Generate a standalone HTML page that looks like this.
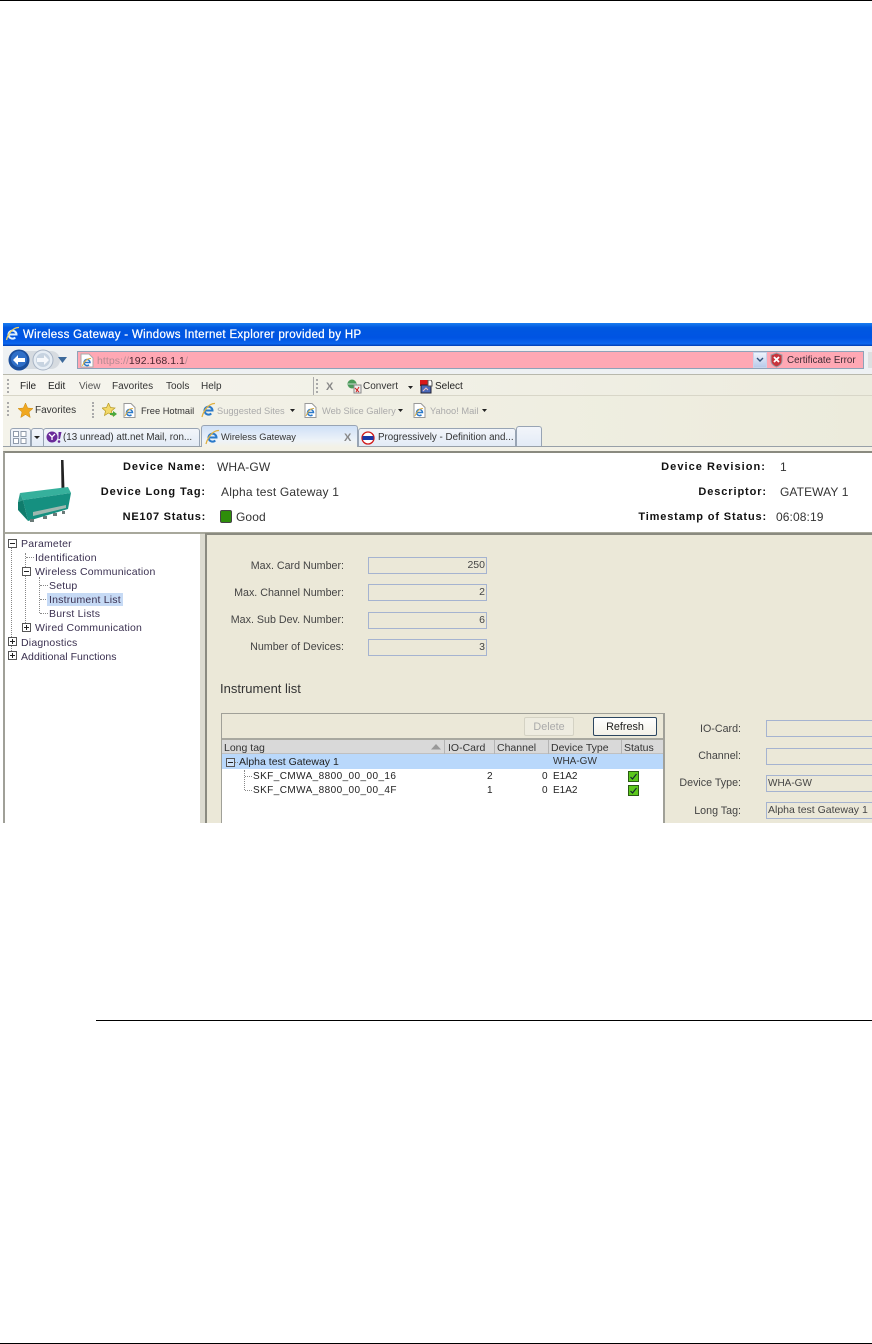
<!DOCTYPE html>
<html><head><meta charset="utf-8"><style>
html,body{margin:0;padding:0;background:#fff}
body{width:872px;height:1344px;position:relative;overflow:hidden;font-family:"Liberation Sans",sans-serif;color:#222}
.r,.t{position:absolute}
.t{white-space:nowrap;font-size:10px;line-height:14px;height:14px}
.g{color:#aaa}
.s{font-size:9.3px}
.b{font-weight:bold;font-size:11px;letter-spacing:.9px;color:#111}
.v{font-size:12px;color:#333;letter-spacing:.1px}
.p{font-size:10.5px;color:#3a3050;letter-spacing:.2px}
.f{font-size:10.7px;color:#444;text-align:right}
.i{position:absolute;box-sizing:border-box;border:1px solid #a5b3d0;background:#ebe8d8;height:17px;font-size:10.5px;line-height:15px;color:#444;text-align:right;padding:0 1px;white-space:nowrap;overflow:hidden}
.tb{position:absolute;box-sizing:border-box;width:9px;height:9px;border:1px solid #555;background:#fff}
.tb:before{content:"";position:absolute;left:1px;top:3px;width:5px;height:1px;background:#222}
.tb.pl:after{content:"";position:absolute;left:3px;top:1px;width:1px;height:5px;background:#222}
.dv{position:absolute;border-left:1px dotted #888}
.dh{position:absolute;border-top:1px dotted #888;height:0}
.ie{position:absolute}
.tab{position:absolute;box-sizing:border-box;border:1px solid #98a4b4;border-bottom:0;border-radius:3px 3px 0 0;background:linear-gradient(#f2f5fa,#e3ebf6)}
.hd{position:absolute;top:740px;height:14px;width:1px;background:#b4b4b4}
.h{font-size:10.5px;color:#333}
</style></head><body>
<div class="r" style="left:0;top:0;width:872px;height:1px;background:#000"></div>
<div class="r" style="left:0;top:1343px;width:872px;height:1px;background:#000"></div>

<!-- title bar -->
<div class="r" style="left:3px;top:323px;width:869px;height:23px;background:linear-gradient(#1a7df0 0,#0058e0 20%,#0054e3 65%,#0a66ee 90%,#003cb0 100%)"></div>
<svg class="ie" style="left:5px;top:326px" width="15" height="16" viewBox="0 0 15 16"><path d="M4 8.500h7.500a4 4 0 1 0-1.200 3" fill="none" stroke="#dff0ff" stroke-width="2"/><path d="M1.500 14C3 7 9 1 14 1.500" fill="none" stroke="#f0d060" stroke-width="1.300"/></svg>
<div class="t" style="left:23px;top:328px;font-size:11.5px;color:#fff;font-weight:400;letter-spacing:.32px;-webkit-text-stroke:.25px #fff">Wireless Gateway - Windows Internet Explorer provided by HP</div>

<!-- nav bar -->
<div class="r" style="left:3px;top:346px;width:869px;height:29px;background:#eef1f3"></div>
<div class="r" style="left:3px;top:374px;width:869px;height:1px;background:#b8b8ac"></div>
<div class="r" style="left:14px;top:351px;width:46px;height:18px;border-radius:9px;background:#d6dbe0"></div>
<svg class="ie" style="left:8px;top:348px" width="50" height="25" viewBox="0 0 50 25">
<circle cx="11" cy="12" r="10.500" fill="#1c4f9c"/><circle cx="11" cy="11" r="8" fill="#2f6fc8"/>
<path d="M5 12l5-5v3h7v4h-7v3z" fill="#fff"/>
<circle cx="35" cy="12" r="10" fill="#e6edf4" stroke="#a8b4c4"/><circle cx="35" cy="12" r="7" fill="#c7d3e0"/>
<path d="M41 12l-5-5v3h-7v4h7v3z" fill="#f6f8fb"/></svg>
<svg class="ie" style="left:58px;top:357px" width="10" height="7"><path d="M0 0h9L4.500 6z" fill="#3d6a9c"/></svg>
<div class="r" style="left:77px;top:351px;width:787px;height:18px;box-sizing:border-box;border:1px solid #8fa2b8;background:#ffa8b4"></div>
<svg class="ie" style="left:80px;top:353px" width="14" height="15" viewBox="0 0 14 15"><path d="M1 1h8l4 4v9H1z" fill="#fff" stroke="#aaa"/><path d="M4 9.500h6a3 3 0 1 0-1 2.300" fill="none" stroke="#2a79c9" stroke-width="1.500"/><path d="M2.500 13C4 8 8 5 11 5.500" fill="none" stroke="#e0b040"/></svg>
<div class="t" style="left:97px;top:354px;font-size:10.5px;color:#b58a92;letter-spacing:.05px">https://<span style="color:#4a2630">192.168.1.1</span>/</div>
<div class="r" style="left:753px;top:352px;width:14px;height:16px;box-sizing:border-box;background:linear-gradient(#eef3fb,#b9caea);border:1px solid #c8d4ea"></div>
<svg class="ie" style="left:756px;top:357px" width="8" height="6"><path d="M1 1l3 3 3-3" fill="none" stroke="#33517a" stroke-width="1.400"/></svg>
<svg class="ie" style="left:770px;top:352px" width="13" height="16" viewBox="0 0 13 16"><path d="M6.500 1L12 3v6c0 3-3 5-5.500 6C4 14 1 12 1 9V3z" fill="#c8343c" stroke="#98a0a8"/><path d="M4 5l5 5M9 5l-5 5" stroke="#fff" stroke-width="1.800"/></svg>
<div class="t" style="left:787px;top:354px;font-size:9.8px;color:#3e2a34">Certificate Error</div>
<div class="r" style="left:868px;top:352px;width:4px;height:16px;background:#dde0e0"></div>

<!-- menu bar -->
<div class="r" style="left:3px;top:375px;width:869px;height:21px;background:linear-gradient(90deg,#f6f5ee,#ecebde)"></div>
<div class="r" style="left:3px;top:395px;width:869px;height:1px;background:#d8d6c8"></div>
<div class="dv" style="left:7px;top:379px;height:14px;border-left:2px dotted #aaa"></div>
<div class="t" style="left:20px;top:380px;color:#222">File</div>
<div class="t" style="left:48px;top:380px;color:#222">Edit</div>
<div class="t" style="left:79px;top:380px;color:#555">View</div>
<div class="t" style="left:112px;top:380px;color:#333">Favorites</div>
<div class="t" style="left:166px;top:380px;color:#333">Tools</div>
<div class="t" style="left:201px;top:380px;color:#333">Help</div>
<div class="r" style="left:313px;top:377px;width:1px;height:18px;background:#aaa"></div>
<div class="dv" style="left:316px;top:379px;height:14px;border-left:2px dotted #aaa"></div>
<div class="t" style="left:326px;top:380px;font-weight:bold;color:#888;font-size:11px">X</div>
<svg class="ie" style="left:347px;top:379px" width="15" height="15" viewBox="0 0 15 15"><circle cx="5" cy="5" r="4.500" fill="#4a9a5a"/><path d="M1 5h8" stroke="#c8d8d0"/><path d="M7 6h7v8H7z" fill="#eee" stroke="#888"/><path d="M8 9l4 4M12 8l-3 5" stroke="#d02020"/></svg>
<div class="t" style="left:363px;top:380px;color:#333">Convert</div>
<svg class="ie" style="left:408px;top:386px" width="6" height="4"><path d="M0 0h5L2.500 3z" fill="#222"/></svg>
<svg class="ie" style="left:420px;top:380px" width="13" height="14" viewBox="0 0 13 14"><rect x="0" y="0" width="8" height="6" fill="#d81818"/><rect x="1" y="5" width="10" height="8" fill="#4a68b8" stroke="#223"/><path d="M8 0h3l1 2v4H8z" fill="#fff" stroke="#555"/><path d="M3 11l3-3 2 2" stroke="#f0c0c0" fill="none"/></svg>
<div class="t" style="left:435px;top:380px;color:#222">Select</div>

<!-- favorites bar -->
<div class="r" style="left:3px;top:396px;width:869px;height:28px;background:linear-gradient(90deg,#f4f3ea,#ecebdc)"></div>
<div class="dv" style="left:7px;top:402px;height:14px;border-left:2px dotted #aaa"></div>
<svg class="ie" style="left:18px;top:403px" width="15" height="15" viewBox="0 0 15 15"><path d="M7.500 0l2.200 5 5.300.5-4 3.500 1.200 5.500-4.700-3-4.700 3 1.200-5.500-4-3.500 5.300-.5z" fill="#f0a820" stroke="#c88810" stroke-width=".5"/></svg>
<div class="t" style="left:35px;top:404px;color:#333">Favorites</div>
<div class="dv" style="left:92px;top:402px;height:16px;border-left:2px dotted #aaa"></div>
<svg class="ie" style="left:102px;top:403px" width="15" height="15" viewBox="0 0 15 15"><path d="M6.500 0l2 4.500 4.500.5-3.500 3 1 4.500-4-2.500-4 2.500 1-4.500L0 5l4.500-.5z" fill="#f2d868" stroke="#b89a20" stroke-width=".7"/><path d="M8 10h3V8l4 3-4 3v-2H8z" fill="#4aa83c"/></svg>
<svg class="ie" style="left:123px;top:403px" width="13" height="15" viewBox="0 0 13 15"><path d="M1 .5h7l4 4v10H1z" fill="#fff" stroke="#999"/><path d="M3.500 9.500h6a3 3 0 1 0-1 2.300" fill="none" stroke="#2a79c9" stroke-width="1.500"/><path d="M2 13C4 8 7 5 10 5.500" fill="none" stroke="#e0b040"/></svg>
<div class="t s" style="left:141px;top:404px;color:#333">Free Hotmail</div>
<svg class="ie" style="left:201px;top:402px" width="15" height="16" viewBox="0 0 15 16"><path d="M4 8.500h7.500a4 4 0 1 0-1.200 3" fill="none" stroke="#2a79c9" stroke-width="2"/><path d="M1 15C3 7 9 1 14 1.500" fill="none" stroke="#e0b040" stroke-width="1.300"/></svg>
<div class="t g s" style="left:217px;top:404px">Suggested Sites</div>
<svg class="ie" style="left:290px;top:409px" width="6" height="4"><path d="M0 0h5L2.500 3z" fill="#222"/></svg>
<svg class="ie" style="left:304px;top:403px" width="13" height="15" viewBox="0 0 13 15"><path d="M1 .5h7l4 4v10H1z" fill="#fff" stroke="#999"/><path d="M3.500 9.500h6a3 3 0 1 0-1 2.300" fill="none" stroke="#2a79c9" stroke-width="1.500"/><path d="M2 13C4 8 7 5 10 5.500" fill="none" stroke="#e0b040"/></svg>
<div class="t g s" style="left:322px;top:404px">Web Slice Gallery</div>
<svg class="ie" style="left:398px;top:409px" width="6" height="4"><path d="M0 0h5L2.500 3z" fill="#222"/></svg>
<svg class="ie" style="left:413px;top:403px" width="13" height="15" viewBox="0 0 13 15"><path d="M1 .5h7l4 4v10H1z" fill="#fff" stroke="#999"/><path d="M3.500 9.500h6a3 3 0 1 0-1 2.300" fill="none" stroke="#2a79c9" stroke-width="1.500"/><path d="M2 13C4 8 7 5 10 5.500" fill="none" stroke="#e0b040"/></svg>
<div class="t g s" style="left:430px;top:404px">Yahoo! Mail</div>
<svg class="ie" style="left:482px;top:409px" width="6" height="4"><path d="M0 0h5L2.500 3z" fill="#222"/></svg>

<!-- tabs -->
<div class="r" style="left:3px;top:424px;width:869px;height:23px;background:linear-gradient(90deg,#f4f3ea,#ecebdc)"></div>
<div class="r" style="left:3px;top:446px;width:869px;height:1px;background:#98a0a8"></div>
<div class="r" style="left:3px;top:447px;width:869px;height:4px;background:#f3f1e6"></div>
<div class="tab" style="left:10px;top:428px;width:21px;height:18px"></div>
<svg class="ie" style="left:13px;top:431px" width="14" height="13"><path d="M.5.500h5v5h-5zM8 .5h5v5H8zM.5 7.500h5v5h-5zM8 7.500h5v5H8z" fill="#fff" stroke="#8f9aaa"/></svg>
<div class="tab" style="left:31px;top:428px;width:13px;height:18px"></div>
<svg class="ie" style="left:34px;top:436px" width="7" height="4"><path d="M0 0h6L3 3z" fill="#222"/></svg>
<div class="tab" style="left:43px;top:428px;width:157px;height:18px"></div>
<svg class="ie" style="left:46px;top:431px" width="16" height="12" viewBox="0 0 16 12"><circle cx="6" cy="6" r="5.500" fill="#6a2a9a"/><path d="M3 3l3 3 3-3M6 6v3" stroke="#fff" fill="none" stroke-width="1.300"/><path d="M12.500 1h3l-1.500 7h-1.500z" fill="#6a2a9a"/><circle cx="13" cy="10.500" r="1.300" fill="#6a2a9a"/></svg>
<div class="t" style="left:63px;top:431px;color:#333;font-size:9.800px">(13 unread) att.net Mail, ron...</div>
<div class="tab" style="left:201px;top:425px;width:157px;height:22px;background:linear-gradient(#cfe0f7,#eef3f8 70%,#f3f1e6);border-bottom:0"></div>
<svg class="ie" style="left:205px;top:429px" width="15" height="16" viewBox="0 0 15 16"><path d="M4 8.500h7.500a4 4 0 1 0-1.200 3" fill="none" stroke="#2a79c9" stroke-width="2"/><path d="M1 15C3 7 9 1 14 1.500" fill="none" stroke="#e0b040" stroke-width="1.300"/></svg>
<div class="t" style="left:221px;top:430px;color:#333;font-size:9.300px">Wireless Gateway</div>
<div class="t" style="left:344px;top:431px;font-weight:bold;color:#888;font-size:11px">X</div>
<div class="tab" style="left:358px;top:428px;width:158px;height:18px"></div>
<svg class="ie" style="left:361px;top:431px" width="14" height="14" viewBox="0 0 14 14"><circle cx="7" cy="7" r="6" fill="#fff" stroke="#d01818" stroke-width="1.300"/><rect x="1.500" y="5" width="11" height="4" fill="#1838a8"/></svg>
<div class="t" style="left:378px;top:431px;color:#333;font-size:9.800px">Progressively - Definition and...</div>
<div class="tab" style="left:516px;top:426px;width:26px;height:20px"></div>

<!-- device header -->
<div class="r" style="left:3px;top:451px;width:869px;height:83px;box-sizing:border-box;background:#fff;border-top:2px solid #8a8a80;border-left:2px solid #a0a098;border-bottom:2px solid #a8a89c"></div>
<svg class="ie" style="left:16px;top:459px" width="58" height="66" viewBox="0 0 58 66">
<path d="M45 1h2.500l1 30h-3z" fill="#222"/>
<path d="M4 34l48-6 3 6-48 7z" fill="#36b09c"/>
<path d="M7 41l48-7-3 16-40 12z" fill="#159080"/>
<path d="M2 43l5-2 5 21-10-11z" fill="#0f7c6c"/>
<path d="M2 43l2-9 3 7z" fill="#2a9c8a"/>
<path d="M17 53l33-7v3l-33 8z" fill="#9fb8b0"/>
<path d="M14 60h4v3h-4zM27 57h4v3h-4zM37 54h4v3h-4zM46 52h3v3h-3z" fill="#6a7a78"/>
</svg>
<div class="t b" style="right:666px;top:460px">Device Name:</div>
<div class="t v" style="left:217px;top:460px">WHA-GW</div>
<div class="t b" style="right:666px;top:485px">Device Long Tag:</div>
<div class="t v" style="left:221px;top:485px;letter-spacing:.2px">Alpha test Gateway 1</div>
<div class="t b" style="right:666px;top:510px;letter-spacing:.72px">NE107 Status:</div>
<div class="r" style="left:220px;top:510px;width:12px;height:13px;box-sizing:border-box;border:1px solid #444;border-radius:2px;background:#2e8e0a"></div>
<div class="t v" style="left:236px;top:510px">Good</div>
<div class="t b" style="right:106px;top:460px;letter-spacing:1.05px">Device Revision:</div>
<div class="t v" style="left:780px;top:460px">1</div>
<div class="t b" style="right:105px;top:485px">Descriptor:</div>
<div class="t v" style="left:780px;top:485px">GATEWAY 1</div>
<div class="t b" style="right:105px;top:510px;letter-spacing:.85px">Timestamp of Status:</div>
<div class="t v" style="left:776px;top:510px">06:08:19</div>

<!-- tree -->
<div class="r" style="left:3px;top:533px;width:2px;height:290px;background:#a0a098"></div>
<div class="r" style="left:5px;top:534px;width:195px;height:289px;background:#fff"></div>
<div class="r" style="left:200px;top:534px;width:5px;height:289px;background:#dcdbd0"></div>
<div class="dv" style="left:11px;top:547px;height:108px"></div>
<div class="dv" style="left:25px;top:553px;height:72px"></div>
<div class="dv" style="left:39px;top:577px;height:36px"></div>
<div class="dh" style="left:26px;top:557px;width:8px"></div>
<div class="dh" style="left:40px;top:585px;width:8px"></div>
<div class="dh" style="left:40px;top:599px;width:8px"></div>
<div class="dh" style="left:40px;top:613px;width:8px"></div>
<div class="tb" style="left:8px;top:539px"></div>
<div class="t p" style="left:21px;top:537px">Parameter</div>
<div class="t p" style="left:35px;top:551px">Identification</div>
<div class="tb" style="left:22px;top:567px"></div>
<div class="t p" style="left:35px;top:565px">Wireless Communication</div>
<div class="t p" style="left:49px;top:579px">Setup</div>
<div class="r" style="left:47px;top:593px;width:76px;height:13px;background:#c6daf5"></div>
<div class="t p" style="left:49px;top:593px">Instrument List</div>
<div class="t p" style="left:49px;top:607px">Burst Lists</div>
<div class="tb pl" style="left:22px;top:623px"></div>
<div class="t p" style="left:35px;top:621px">Wired Communication</div>
<div class="tb pl" style="left:8px;top:637px"></div>
<div class="t p" style="left:21px;top:636px">Diagnostics</div>
<div class="tb pl" style="left:8px;top:651px"></div>
<div class="t p" style="left:21px;top:650px;letter-spacing:.05px">Additional Functions</div>

<!-- right panel -->
<div class="r" style="left:205px;top:533px;width:667px;height:290px;background:#ebe8d8;border-top:2px solid #8a8a80;border-left:2px solid #8a8a80;box-sizing:border-box"></div>
<div class="t f" style="right:528px;top:559px">Max. Card Number:</div>
<div class="t f" style="right:528px;top:586px">Max. Channel Number:</div>
<div class="t f" style="right:528px;top:613px">Max. Sub Dev. Number:</div>
<div class="t f" style="right:528px;top:640px">Number of Devices:</div>
<div class="i" style="left:368px;top:557px;width:119px">250</div>
<div class="i" style="left:368px;top:584px;width:119px">2</div>
<div class="i" style="left:368px;top:612px;width:119px">6</div>
<div class="i" style="left:368px;top:639px;width:119px">3</div>
<div class="t" style="left:220px;top:682px;font-size:13px;color:#333">Instrument list</div>

<!-- list -->
<div class="r" style="left:221px;top:713px;width:444px;height:110px;box-sizing:border-box;border-top:1px solid #a0a098;border-left:1px solid #a0a098;background:#fff"></div>
<div class="r" style="left:222px;top:714px;width:441px;height:26px;background:#ebe8d8;border-bottom:2px solid #a8a8a0;box-sizing:border-box"></div>
<div class="r" style="left:663px;top:713px;width:2px;height:110px;background:#a0a098"></div>
<div class="r" style="left:524px;top:717px;width:50px;height:19px;box-sizing:border-box;border:1px solid #d4d2c4;border-radius:2px;background:#eeece0;color:#aaa;font-size:10.800px;line-height:18px;text-align:center">Delete</div>
<div class="r" style="left:593px;top:717px;width:64px;height:19px;box-sizing:border-box;border:1px solid #2c4660;border-radius:2px;background:linear-gradient(#fff,#f3f1e8);color:#222;font-size:10.800px;line-height:18px;text-align:center">Refresh</div>
<div class="r" style="left:222px;top:740px;width:441px;height:14px;background:#d9d9d9;border-bottom:1px solid #c0c0c0;box-sizing:border-box"></div>
<div class="hd" style="left:444px"></div>
<div class="hd" style="left:494px"></div>
<div class="hd" style="left:548px"></div>
<div class="hd" style="left:621px"></div>
<div class="t h" style="left:224px;top:741px">Long tag</div>
<svg class="ie" style="left:431px;top:744px" width="10" height="6"><path d="M0 5.500L5 0l5 5.500z" fill="#999"/></svg>
<div class="t h" style="left:448px;top:741px">IO-Card</div>
<div class="t h" style="left:497px;top:741px">Channel</div>
<div class="t h" style="left:551px;top:741px">Device Type</div>
<div class="t h" style="left:624px;top:741px">Status</div>
<div class="r" style="left:222px;top:754px;width:441px;height:15px;background:#b9d8fb"></div>
<div class="tb" style="left:226px;top:758px;background:#cfe3fa"></div>
<div class="dh" style="left:235px;top:762px;width:3px"></div>
<div class="t" style="left:239px;top:755px;color:#222;font-size:10.500px">Alpha test Gateway 1</div>
<div class="t" style="left:553px;top:755px;color:#333">WHA-GW</div>
<div class="dv" style="left:244px;top:770px;height:20px"></div>
<div class="dh" style="left:245px;top:776px;width:7px"></div>
<div class="dh" style="left:245px;top:790px;width:7px"></div>
<div class="t" style="left:253px;top:770px;color:#222;letter-spacing:.42px">SKF_CMWA_8800_00_00_16</div>
<div class="t" style="left:487px;top:770px;color:#222">2</div>
<div class="t" style="left:542px;top:770px;color:#222">0</div>
<div class="t" style="left:553px;top:770px;color:#222">E1A2</div>
<svg class="ie" style="left:628px;top:771px" width="11" height="11"><rect x=".5" y=".5" width="10" height="10" fill="#5cc81c" stroke="#2a5a14"/><path d="M2.500 6l2 2 4-5" fill="none" stroke="#123" stroke-width="1.100"/></svg>
<div class="t" style="left:253px;top:784px;color:#222;letter-spacing:.42px">SKF_CMWA_8800_00_00_4F</div>
<div class="t" style="left:487px;top:784px;color:#222">1</div>
<div class="t" style="left:542px;top:784px;color:#222">0</div>
<div class="t" style="left:553px;top:784px;color:#222">E1A2</div>
<svg class="ie" style="left:628px;top:785px" width="11" height="11"><rect x=".5" y=".5" width="10" height="10" fill="#5cc81c" stroke="#2a5a14"/><path d="M2.500 6l2 2 4-5" fill="none" stroke="#123" stroke-width="1.100"/></svg>

<div class="t f" style="right:131px;top:722px">IO-Card:</div>
<div class="t f" style="right:131px;top:749px">Channel:</div>
<div class="t f" style="right:131px;top:776px">Device Type:</div>
<div class="t f" style="right:131px;top:804px">Long Tag:</div>
<div class="i" style="left:766px;top:720px;width:110px"></div>
<div class="i" style="left:766px;top:748px;width:110px"></div>
<div class="i" style="left:766px;top:775px;width:110px;text-align:left;font-size:10px">WHA-GW</div>
<div class="i" style="left:766px;top:802px;width:110px;text-align:left;font-size:10.500px">Alpha test Gateway 1</div>
<div class="r" style="left:0;top:823px;width:872px;height:197px;background:#fff"></div>
<div class="r" style="left:96px;top:1020px;width:776px;height:1px;background:#000"></div>
</body></html>
